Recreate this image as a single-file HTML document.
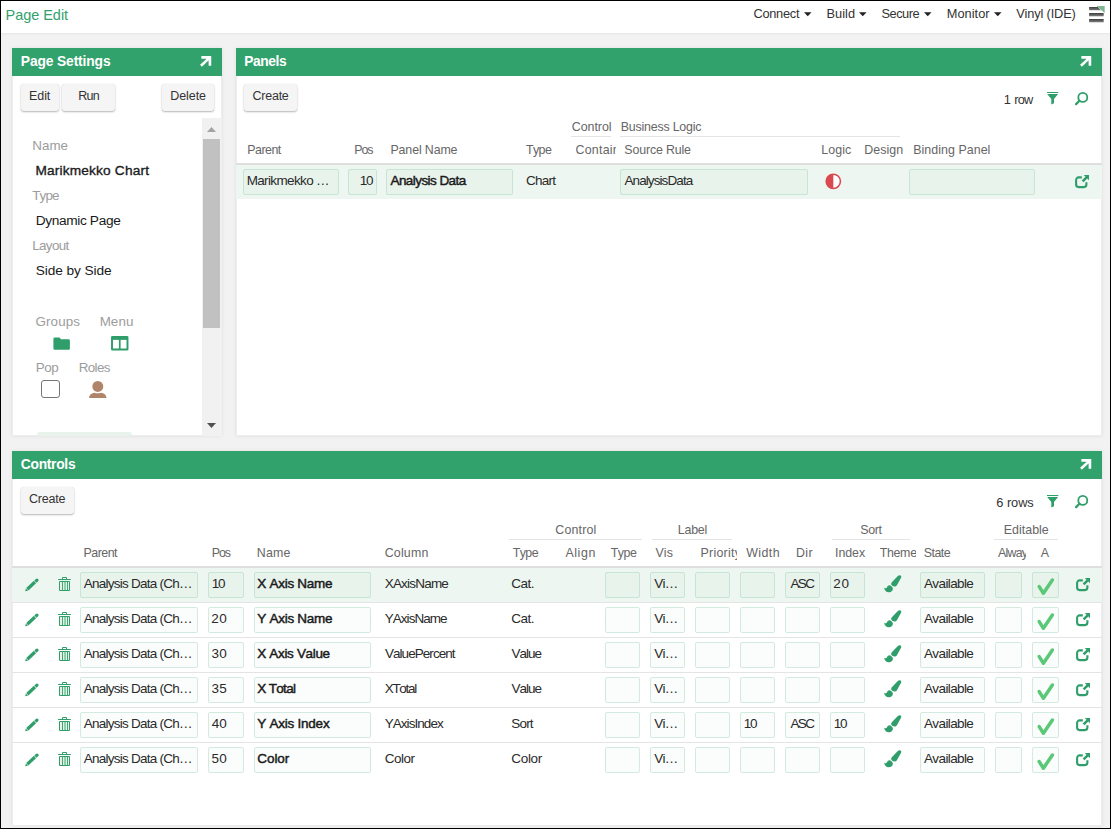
<!DOCTYPE html><html><head><meta charset="utf-8"><title>Page Edit</title><style>
*{box-sizing:border-box}
html,body{margin:0;padding:0}
body{width:1111px;height:829px;position:relative;overflow:hidden;background:#f2f2f2;font-family:"Liberation Sans",sans-serif;font-size:13px;color:#222;font-kerning:none}
.a,.t,svg{position:absolute}
svg{display:block;overflow:visible}
.t{white-space:nowrap;line-height:16px;height:16px;color:#2a2a2a}
.c{overflow:hidden}
#frame{left:0;top:0;width:1111px;height:829px;border:1px solid #000;z-index:50}
#top{left:0;top:0;width:1111px;height:33px;background:#fff;box-shadow:0 1px 2px rgba(0,0,0,.05)}
.panel{background:#fff;border:1px solid #ececec;box-shadow:0 0 4px rgba(0,0,0,.08)}
.ph{height:28px;background:#32a26d}
.pt{color:#fff;font-weight:bold}
.btn{height:27px;background:#f5f5f5;border-radius:3px;box-shadow:0 1px 2px rgba(0,0,0,.28),0 0 1px rgba(0,0,0,.12)}
.lbl{color:#9c9c9c}
.hd{color:#666}
.inp{height:26px;border:1px solid #d3ebdf;border-radius:2px;background:#fbfdfc}
.inp.s{background:#e8f3ec;border-color:#c6e5d4}
.rs{height:1px;background:#e4e4e4}
.ul{height:1px;background:#e4e4e4}
.hl{height:2px;background:#dedede}
.b{font-weight:bold}
</style></head><body>
<div class="a " style="left:0px;top:0px;width:1111px;height:33px;background:#fff;box-shadow:0 1px 2px rgba(0,0,0,.05)"></div>
<span class="t " style="left:5.56px;top:7.00px;font-size:14.5px;letter-spacing:-0.042px;color:#32a26d">Page Edit</span>
<span class="t " style="left:753.45px;top:5.50px;font-size:12.8px;letter-spacing:-0.272px;color:#333">Connect</span>
<span class="t " style="left:826.50px;top:5.50px;font-size:12.8px;letter-spacing:0.016px;color:#333">Build</span>
<span class="t " style="left:881.52px;top:5.50px;font-size:12.8px;letter-spacing:-0.501px;color:#333">Secure</span>
<span class="t " style="left:946.70px;top:5.50px;font-size:12.8px;letter-spacing:0.039px;color:#333">Monitor</span>
<span class="t " style="left:1016.24px;top:5.50px;font-size:12.8px;letter-spacing:-0.161px;color:#333">Vinyl (IDE)</span>
<svg style="left:803.8px;top:11.7px" width="7.5" height="4.5" viewBox="0 0 9 5"><path d="M0 0h9L4.500 5z" fill="#222"/></svg>
<svg style="left:858.7px;top:11.7px" width="7.5" height="4.5" viewBox="0 0 9 5"><path d="M0 0h9L4.500 5z" fill="#222"/></svg>
<svg style="left:923.8px;top:11.7px" width="7.5" height="4.5" viewBox="0 0 9 5"><path d="M0 0h9L4.500 5z" fill="#222"/></svg>
<svg style="left:993.9px;top:11.7px" width="7.5" height="4.5" viewBox="0 0 9 5"><path d="M0 0h9L4.500 5z" fill="#222"/></svg>
<svg style="left:1089.4px;top:6px" width="15.7" height="16.4" viewBox="0 0 15.7 16.4"><defs><linearGradient id="hb" x1="0" y1="0" x2="0" y2="1"><stop offset="0" stop-color="#3c3c3c"/><stop offset="1" stop-color="#808080"/></linearGradient></defs><path d="M0.100 1h8.600l3.300 3.300H0.100z" fill="url(#hb)"/><path d="M0.100 7h14.600v3.300H0.100z" fill="url(#hb)"/><path d="M0.100 13h14.600v3.300H0.100z" fill="url(#hb)"/><path d="M7.600 0H15.700V7.100z" fill="#7db790"/></svg>
<div class="a panel" style="left:12px;top:48px;width:210px;height:388px;"></div>
<div class="a ph" style="left:12px;top:48px;width:210px;"></div>
<span class="t pt b" style="left:20.83px;top:53.50px;font-size:13.8px;letter-spacing:-0.126px;">Page Settings</span>
<svg style="left:200.1px;top:56.2px" width="11.3" height="10.6" viewBox="0 0 11.6 10.8"><path d="M1.400 1.400H10.200V10M9.700 1.900L1 10" fill="none" stroke="#fff" stroke-width="2.700"/></svg>
<div class="a btn" style="left:21px;top:83.5px;width:38px;"></div>
<span class="t " style="left:28.97px;top:88.00px;font-size:12.5px;letter-spacing:-0.057px;color:#333">Edit</span>
<div class="a btn" style="left:62px;top:83.5px;width:53px;"></div>
<span class="t " style="left:78.22px;top:88.00px;font-size:12.5px;letter-spacing:-0.672px;color:#333">Run</span>
<div class="a btn" style="left:162px;top:83.5px;width:52px;"></div>
<span class="t " style="left:170.22px;top:88.00px;font-size:12.5px;letter-spacing:-0.060px;color:#333">Delete</span>
<div class="a " style="left:202px;top:118px;width:20px;height:318px;background:#f1f1f1"></div>
<div class="a " style="left:203.25px;top:139px;width:16.75px;height:189px;background:#c1c1c1"></div>
<svg style="left:207px;top:127px" width="9" height="5" viewBox="0 0 9 5"><path d="M0 5h9L4.500 0z" fill="#a3a3a3"/></svg>
<svg style="left:207px;top:423px" width="9" height="5" viewBox="0 0 9 5"><path d="M0 0h9L4.500 5z" fill="#505050"/></svg>
<span class="t lbl" style="left:32.15px;top:137.50px;font-size:13.4px;letter-spacing:0.067px;">Name</span>
<span class="t " style="left:35.38px;top:162.50px;font-size:13.7px;letter-spacing:0.172px;-webkit-text-stroke:0.45px;color:#1a1a1a;-webkit-text-stroke:0.350px;">Marikmekko Chart</span>
<span class="t lbl" style="left:32.20px;top:187.50px;font-size:13.4px;letter-spacing:-0.798px;">Type</span>
<span class="t " style="left:35.63px;top:212.50px;font-size:13.7px;letter-spacing:-0.351px;color:#1a1a1a">Dynamic Page</span>
<span class="t lbl" style="left:32.15px;top:237.50px;font-size:13.4px;letter-spacing:-0.607px;">Layout</span>
<span class="t " style="left:35.78px;top:262.50px;font-size:13.7px;letter-spacing:-0.099px;color:#1a1a1a">Side by Side</span>
<span class="t lbl" style="left:35.48px;top:313.50px;font-size:13.4px;letter-spacing:0.113px;">Groups</span>
<span class="t lbl" style="left:99.65px;top:313.50px;font-size:13.4px;letter-spacing:0.073px;">Menu</span>
<span class="t lbl" style="left:35.65px;top:359.50px;font-size:13.4px;letter-spacing:-0.340px;">Pop</span>
<span class="t lbl" style="left:78.65px;top:359.50px;font-size:13.4px;letter-spacing:-0.606px;">Roles</span>
<svg style="left:52.75px;top:337px" width="17.5" height="13.25" viewBox="0 0 18 14"><path d="M1.600 0.400h5l1.600 2h8a1.400 1.400 0 0 1 1.400 1.400v8.400a1.400 1.400 0 0 1-1.400 1.400H1.600A1.400 1.400 0 0 1 .2 12.200V1.800A1.400 1.400 0 0 1 1.600.4z" fill="#2f9e6a"/></svg>
<svg style="left:111.25px;top:336.25px" width="17.5" height="14.5" viewBox="0 0 18 15"><rect x="1" y="1" width="16" height="13" rx="0.400" fill="none" stroke="#2f9e6a" stroke-width="2"/><path d="M1 1h16v3H1z" fill="#2f9e6a"/><path d="M9 3v11" stroke="#2f9e6a" stroke-width="1.800"/></svg>
<div class="a " style="left:41.25px;top:380px;width:18.75px;height:18.25px;border:1.500px solid #767676;border-radius:3px;background:#fff"></div>
<svg style="left:89.25px;top:381.25px" width="17.6" height="17" viewBox="0 0 17.2 16.8"><circle cx="8.600" cy="5.400" r="5.400" fill="#b08468"/><path d="M0 16.800C0 13.600 2.800 11.600 5.400 11.500 6.400 11.900 7.400 12.100 8.600 12.100S10.800 11.900 11.800 11.500C14.400 11.600 17.200 13.600 17.200 16.800z" fill="#b08468"/></svg>
<div class="a " style="left:37px;top:432px;width:95px;height:4px;border-radius:3px 3px 0 0;background:#e8f3ec"></div>
<div class="a panel" style="left:236px;top:48px;width:866px;height:388px;"></div>
<div class="a ph" style="left:236px;top:48px;width:866px;"></div>
<span class="t pt b" style="left:244.33px;top:53.50px;font-size:13.8px;letter-spacing:-0.451px;">Panels</span>
<svg style="left:1080.1px;top:56.2px" width="11.3" height="10.6" viewBox="0 0 11.6 10.8"><path d="M1.400 1.400H10.200V10M9.700 1.900L1 10" fill="none" stroke="#fff" stroke-width="2.700"/></svg>
<div class="a btn" style="left:244px;top:83.5px;width:53px;"></div>
<span class="t " style="left:252.52px;top:88.00px;font-size:12.5px;letter-spacing:-0.246px;color:#333">Create</span>
<span class="t " style="left:1003.77px;top:91.50px;font-size:12.8px;letter-spacing:-0.852px;color:#333;word-spacing:1.500px">1 row</span>
<svg style="left:1046.8px;top:92px" width="11.3" height="12.6" viewBox="0 0 11.3 12.6"><path d="M0 0h11.300v1.100H0zM0.200 2.100h10.900L7 6.900v4.300L4.300 12.600V6.900z" fill="#2f9e6a"/></svg>
<svg style="left:1075px;top:91.5px" width="13.2" height="13.2" viewBox="0 0 13.2 13.2"><circle cx="7.800" cy="5.400" r="4.500" fill="none" stroke="#2f9e6a" stroke-width="1.800"/><path d="M4.400 8.800L1.100 12.100" stroke="#2f9e6a" stroke-width="2.300" stroke-linecap="round"/></svg>
<span class="t hd" style="left:571.77px;top:119.00px;font-size:12.4px;letter-spacing:-0.027px;">Control</span>
<span class="t hd" style="left:620.73px;top:119.00px;font-size:12.4px;letter-spacing:-0.197px;">Business Logic</span>
<div class="a ul" style="left:571px;top:136px;width:40px;"></div>
<div class="a ul" style="left:620px;top:136px;width:280px;"></div>
<span class="t hd" style="left:247.23px;top:142.00px;font-size:12.4px;letter-spacing:-0.485px;">Parent</span>
<span class="t hd" style="left:354.23px;top:142.00px;font-size:12.4px;letter-spacing:-1.076px;">Pos</span>
<span class="t hd" style="left:390.48px;top:142.00px;font-size:12.4px;letter-spacing:-0.130px;">Panel Name</span>
<span class="t hd" style="left:525.97px;top:142.00px;font-size:12.4px;letter-spacing:-0.579px;">Type</span>
<span class="t hd c" style="left:575.52px;top:142.00px;font-size:12.4px;letter-spacing:0.240px;width:40.73px;">Container</span>
<span class="t hd" style="left:624.34px;top:142.00px;font-size:12.4px;letter-spacing:-0.152px;">Source Rule</span>
<span class="t hd" style="left:821.23px;top:142.00px;font-size:12.4px;letter-spacing:0.113px;">Logic</span>
<span class="t hd" style="left:864.23px;top:142.00px;font-size:12.4px;letter-spacing:0.075px;">Design</span>
<span class="t hd" style="left:913.23px;top:142.00px;font-size:12.4px;letter-spacing:0.056px;">Binding Panel</span>
<div class="a hl" style="left:236px;top:163px;width:866px;"></div>
<div class="a " style="left:236px;top:165px;width:866px;height:34px;background:#edf6f0"></div>
<div class="a inp s" style="left:243px;top:169px;width:96px;"></div>
<span class="t " style="left:246.64px;top:172.50px;font-size:13.5px;letter-spacing:-0.638px;">Marikmekko …</span>
<div class="a inp s" style="left:348px;top:169px;width:29px;"></div>
<span class="t " style="left:359.72px;top:172.50px;font-size:13.5px;letter-spacing:-1.210px;">10</span>
<div class="a inp s" style="left:386px;top:169px;width:127px;"></div>
<span class="t " style="left:390.47px;top:172.50px;font-size:13.5px;letter-spacing:-0.563px;-webkit-text-stroke:0.45px;color:#1a1a1a;">Analysis Data</span>
<span class="t " style="left:525.96px;top:172.50px;font-size:13.5px;letter-spacing:-0.719px;">Chart</span>
<div class="a inp s" style="left:620px;top:169px;width:188px;"></div>
<span class="t " style="left:624.47px;top:172.50px;font-size:13.5px;letter-spacing:-0.910px;">AnalysisData</span>
<svg style="left:825.4px;top:172.9px" width="16.6" height="16.6" viewBox="0 0 17 17"><circle cx="8.500" cy="8.500" r="7.300" fill="#fff" stroke="#d9494f" stroke-width="1.600"/><path d="M8.500 1.200a7.300 7.300 0 0 0 0 14.600z" fill="#d9494f"/></svg>
<div class="a inp s" style="left:909px;top:169px;width:126px;"></div>
<svg style="left:1075.3px;top:175.2px" width="14" height="13.2" viewBox="0 0 14 13.2"><path d="M6.800 2.400H3.600A2.500 2.500 0 0 0 1.100 4.900V9.600A2.500 2.500 0 0 0 3.600 12.100H8.900A2.500 2.500 0 0 0 11.400 9.600V7.200" fill="none" stroke="#2f9e6a" stroke-width="2.100"/><path d="M8.800 0H14V5.200L12.300 3.500 8.500 7.300 6.700 5.500 10.500 1.700z" fill="#2f9e6a"/></svg>
<div class="a panel" style="left:12px;top:451px;width:1090px;height:375px;"></div>
<div class="a ph" style="left:12px;top:451px;width:1090px;"></div>
<span class="t pt b" style="left:20.83px;top:456.50px;font-size:13.8px;letter-spacing:-0.285px;">Controls</span>
<svg style="left:1080.1px;top:459.2px" width="11.3" height="10.6" viewBox="0 0 11.6 10.8"><path d="M1.400 1.400H10.200V10M9.700 1.900L1 10" fill="none" stroke="#fff" stroke-width="2.700"/></svg>
<div class="a btn" style="left:21px;top:486.5px;width:53px;"></div>
<span class="t " style="left:29.02px;top:491.00px;font-size:12.5px;letter-spacing:-0.196px;color:#333">Create</span>
<span class="t " style="left:996.35px;top:494.50px;font-size:12.8px;letter-spacing:-0.067px;color:#333">6 rows</span>
<svg style="left:1046.8px;top:495px" width="11.3" height="12.6" viewBox="0 0 11.3 12.6"><path d="M0 0h11.300v1.100H0zM0.200 2.100h10.900L7 6.900v4.300L4.300 12.600V6.900z" fill="#2f9e6a"/></svg>
<svg style="left:1075px;top:494.5px" width="13.2" height="13.2" viewBox="0 0 13.2 13.2"><circle cx="7.800" cy="5.400" r="4.500" fill="none" stroke="#2f9e6a" stroke-width="1.800"/><path d="M4.400 8.800L1.100 12.100" stroke="#2f9e6a" stroke-width="2.300" stroke-linecap="round"/></svg>
<span class="t hd" style="left:555.27px;top:522.00px;font-size:12.4px;letter-spacing:0.181px;">Control</span>
<div class="a ul" style="left:509px;top:539px;width:133px;"></div>
<span class="t hd" style="left:677.73px;top:522.00px;font-size:12.4px;letter-spacing:-0.186px;">Label</span>
<div class="a ul" style="left:652px;top:539px;width:80px;"></div>
<span class="t hd" style="left:860.34px;top:522.00px;font-size:12.4px;letter-spacing:-0.329px;">Sort</span>
<div class="a ul" style="left:832px;top:539px;width:78px;"></div>
<span class="t hd" style="left:1003.73px;top:522.00px;font-size:12.4px;letter-spacing:0.037px;">Editable</span>
<div class="a ul" style="left:994px;top:539px;width:64px;"></div>
<span class="t hd" style="left:83.48px;top:545.00px;font-size:12.4px;letter-spacing:-0.485px;">Parent</span>
<span class="t hd" style="left:211.73px;top:545.00px;font-size:12.4px;letter-spacing:-1.076px;">Pos</span>
<span class="t hd" style="left:256.73px;top:545.00px;font-size:12.4px;letter-spacing:0.247px;">Name</span>
<span class="t hd" style="left:384.77px;top:545.00px;font-size:12.4px;letter-spacing:0.161px;">Column</span>
<span class="t hd" style="left:512.72px;top:545.00px;font-size:12.4px;letter-spacing:-0.579px;">Type</span>
<span class="t hd" style="left:565.48px;top:545.00px;font-size:12.4px;letter-spacing:0.564px;">Align</span>
<span class="t hd" style="left:610.72px;top:545.00px;font-size:12.4px;letter-spacing:-0.496px;">Type</span>
<span class="t hd" style="left:655.45px;top:545.00px;font-size:12.4px;letter-spacing:0.138px;">Vis</span>
<span class="t hd c" style="left:700.48px;top:545.00px;font-size:12.4px;letter-spacing:0.280px;width:36.52px;">Priority</span>
<span class="t hd" style="left:746.20px;top:545.00px;font-size:12.4px;letter-spacing:0.416px;">Width</span>
<span class="t hd" style="left:795.98px;top:545.00px;font-size:12.4px;letter-spacing:0.442px;">Dir</span>
<span class="t hd" style="left:835.11px;top:545.00px;font-size:12.4px;letter-spacing:-0.077px;">Index</span>
<span class="t hd c" style="left:879.72px;top:545.00px;font-size:12.4px;letter-spacing:-0.316px;width:36.78px;">Theme</span>
<span class="t hd" style="left:923.84px;top:545.00px;font-size:12.4px;letter-spacing:-0.560px;">State</span>
<span class="t hd c" style="left:997.98px;top:545.00px;font-size:12.4px;letter-spacing:-0.761px;width:28.27px;">Always</span>
<span class="t hd" style="left:1040.73px;top:545.00px;font-size:12.4px;letter-spacing:-0.222px;">A</span>
<div class="a hl" style="left:12px;top:566px;width:1090px;"></div>
<div class="a " style="left:12px;top:568px;width:1090px;height:34px;background:#edf6f0"></div>
<div class="a rs" style="left:12px;top:602px;width:1090px;"></div>
<svg style="left:24.8px;top:577.7px" width="14.2" height="13.4" viewBox="0 0 14.2 13.4"><path d="M0.200 13.200L0.860 10.390 3.040 12.730zM1.230 10.050L3.410 12.390 11.070 5.200 8.890 2.860zM9.330 2.450L11.510 4.790 13.120 3.290A1.600 1.600 0 0 0 10.940 0.950z" fill="#2f9e6a"/></svg>
<svg style="left:58px;top:577px" width="13" height="14" viewBox="0 0 13 14"><path d="M4.500 2.200V0.500h4V2.200" fill="none" stroke="#2f9e6a" stroke-width="1"/><path d="M0.100 2h12.700v1H0.100z" fill="#2f9e6a"/><path d="M1.500 4.500h10v9h-10z" fill="#e6f2e6" stroke="#2f9e6a" stroke-width="1"/><path d="M4.500 4.500v9M7 4.500v9M9.500 4.500v9" stroke="#2f9e6a" stroke-width="0.900"/></svg>
<div class="a inp s" style="left:80px;top:572px;width:118px;"></div>
<span class="t " style="left:83.77px;top:575.50px;font-size:13.5px;letter-spacing:-0.752px;">Analysis Data (Ch…</span>
<div class="a inp s" style="left:208px;top:572px;width:36px;"></div>
<span class="t " style="left:211.72px;top:575.50px;font-size:13.5px;letter-spacing:-1.210px;">10</span>
<div class="a inp s" style="left:254px;top:572px;width:117px;"></div>
<span class="t " style="left:257.20px;top:575.50px;font-size:13.5px;letter-spacing:-0.262px;-webkit-text-stroke:0.45px;color:#1a1a1a;">X Axis Name</span>
<span class="t " style="left:384.70px;top:575.50px;font-size:13.5px;letter-spacing:-0.796px;">XAxisName</span>
<span class="t " style="left:511.21px;top:575.50px;font-size:13.5px;letter-spacing:-0.497px;">Cat.</span>
<div class="a inp s" style="left:605px;top:572px;width:35px;"></div>
<div class="a inp s" style="left:650px;top:572px;width:35px;"></div>
<span class="t " style="left:654.19px;top:575.50px;font-size:13.5px;letter-spacing:-0.731px;">Vi…</span>
<div class="a inp s" style="left:695px;top:572px;width:35px;"></div>
<div class="a inp s" style="left:740px;top:572px;width:35px;"></div>
<div class="a inp s" style="left:785px;top:572px;width:35px;"></div>
<span class="t " style="left:790.47px;top:575.50px;font-size:13.5px;letter-spacing:-1.609px;">ASC</span>
<div class="a inp s" style="left:830px;top:572px;width:35px;"></div>
<span class="t " style="left:833.32px;top:575.50px;font-size:13.5px;letter-spacing:0.690px;">20</span>
<svg style="left:883.9px;top:574.8px" width="17.4" height="17.4" viewBox="0 0 17.4 17.4"><path d="M15.800 0.200C17 0.200 17.600 1.400 17.200 2.600L12.900 10.200C12.200 11.500 10.400 11.900 8.600 11 7.200 10.200 6.800 8.900 7.600 7.600L13.600 1.200C14.200 0.500 15 0.200 15.800 0.200Z" fill="#2f9e6a"/><path d="M5.400 10.300C6.800 10.600 8.200 11.600 8.800 13 9.200 15.400 7.400 17.300 4.800 17.300 2.200 17.300 0.600 15.400 0 12.400 1 13.400 2 13.600 2.800 12.800 3.200 11.400 4.200 10.400 5.400 10.300Z" fill="#2f9e6a"/></svg>
<div class="a inp s" style="left:920px;top:572px;width:65px;"></div>
<span class="t " style="left:923.97px;top:575.50px;font-size:13.5px;letter-spacing:-0.614px;">Available</span>
<div class="a inp s" style="left:995px;top:572px;width:27px;"></div>
<div class="a inp s" style="left:1032px;top:572px;width:27px;"></div>
<svg style="left:1036.8px;top:577.8px" width="17.4" height="17.4" viewBox="0 0 17.4 17.4"><path d="M2.200 8.600L6.400 15.200 15.400 2" fill="none" stroke="#5bc877" stroke-width="3.500" stroke-linecap="round" stroke-linejoin="round"/></svg>
<svg style="left:1076px;top:577.8px" width="14" height="13.2" viewBox="0 0 14 13.2"><path d="M6.800 2.400H3.600A2.500 2.500 0 0 0 1.100 4.900V9.600A2.500 2.500 0 0 0 3.600 12.100H8.900A2.500 2.500 0 0 0 11.400 9.600V7.200" fill="none" stroke="#2f9e6a" stroke-width="2.100"/><path d="M8.800 0H14V5.200L12.300 3.500 8.500 7.300 6.700 5.500 10.500 1.700z" fill="#2f9e6a"/></svg>
<div class="a rs" style="left:12px;top:637px;width:1090px;"></div>
<svg style="left:24.8px;top:612.7px" width="14.2" height="13.4" viewBox="0 0 14.2 13.4"><path d="M0.200 13.200L0.860 10.390 3.040 12.730zM1.230 10.050L3.410 12.390 11.070 5.200 8.890 2.860zM9.330 2.450L11.510 4.790 13.120 3.290A1.600 1.600 0 0 0 10.940 0.950z" fill="#2f9e6a"/></svg>
<svg style="left:58px;top:612px" width="13" height="14" viewBox="0 0 13 14"><path d="M4.500 2.200V0.500h4V2.200" fill="none" stroke="#2f9e6a" stroke-width="1"/><path d="M0.100 2h12.700v1H0.100z" fill="#2f9e6a"/><path d="M1.500 4.500h10v9h-10z" fill="#e6f2e6" stroke="#2f9e6a" stroke-width="1"/><path d="M4.500 4.500v9M7 4.500v9M9.500 4.500v9" stroke="#2f9e6a" stroke-width="0.900"/></svg>
<div class="a inp" style="left:80px;top:607px;width:118px;"></div>
<span class="t " style="left:83.77px;top:610.50px;font-size:13.5px;letter-spacing:-0.752px;">Analysis Data (Ch…</span>
<div class="a inp" style="left:208px;top:607px;width:36px;"></div>
<span class="t " style="left:211.32px;top:610.50px;font-size:13.5px;letter-spacing:0.440px;">20</span>
<div class="a inp" style="left:254px;top:607px;width:117px;"></div>
<span class="t " style="left:257.20px;top:610.50px;font-size:13.5px;letter-spacing:-0.262px;-webkit-text-stroke:0.45px;color:#1a1a1a;">Y Axis Name</span>
<span class="t " style="left:384.70px;top:610.50px;font-size:13.5px;letter-spacing:-0.953px;">YAxisName</span>
<span class="t " style="left:511.21px;top:610.50px;font-size:13.5px;letter-spacing:-0.497px;">Cat.</span>
<div class="a inp" style="left:605px;top:607px;width:35px;"></div>
<div class="a inp" style="left:650px;top:607px;width:35px;"></div>
<span class="t " style="left:654.19px;top:610.50px;font-size:13.5px;letter-spacing:-0.731px;">Vi…</span>
<div class="a inp" style="left:695px;top:607px;width:35px;"></div>
<div class="a inp" style="left:740px;top:607px;width:35px;"></div>
<div class="a inp" style="left:785px;top:607px;width:35px;"></div>
<div class="a inp" style="left:830px;top:607px;width:35px;"></div>
<svg style="left:883.9px;top:609.8px" width="17.4" height="17.4" viewBox="0 0 17.4 17.4"><path d="M15.800 0.200C17 0.200 17.600 1.400 17.200 2.600L12.900 10.200C12.200 11.500 10.400 11.900 8.600 11 7.200 10.200 6.800 8.900 7.600 7.600L13.600 1.200C14.200 0.500 15 0.200 15.800 0.200Z" fill="#2f9e6a"/><path d="M5.400 10.300C6.800 10.600 8.200 11.600 8.800 13 9.200 15.400 7.400 17.300 4.800 17.300 2.200 17.300 0.600 15.400 0 12.400 1 13.400 2 13.600 2.800 12.800 3.200 11.400 4.200 10.400 5.400 10.300Z" fill="#2f9e6a"/></svg>
<div class="a inp" style="left:920px;top:607px;width:65px;"></div>
<span class="t " style="left:923.97px;top:610.50px;font-size:13.5px;letter-spacing:-0.614px;">Available</span>
<div class="a inp" style="left:995px;top:607px;width:27px;"></div>
<div class="a inp" style="left:1032px;top:607px;width:27px;"></div>
<svg style="left:1036.8px;top:612.8px" width="17.4" height="17.4" viewBox="0 0 17.4 17.4"><path d="M2.200 8.600L6.400 15.200 15.400 2" fill="none" stroke="#5bc877" stroke-width="3.500" stroke-linecap="round" stroke-linejoin="round"/></svg>
<svg style="left:1076px;top:612.8px" width="14" height="13.2" viewBox="0 0 14 13.2"><path d="M6.800 2.400H3.600A2.500 2.500 0 0 0 1.100 4.900V9.600A2.500 2.500 0 0 0 3.600 12.100H8.900A2.500 2.500 0 0 0 11.400 9.600V7.200" fill="none" stroke="#2f9e6a" stroke-width="2.100"/><path d="M8.800 0H14V5.200L12.300 3.500 8.500 7.300 6.700 5.500 10.500 1.700z" fill="#2f9e6a"/></svg>
<div class="a rs" style="left:12px;top:672px;width:1090px;"></div>
<svg style="left:24.8px;top:647.7px" width="14.2" height="13.4" viewBox="0 0 14.2 13.4"><path d="M0.200 13.200L0.860 10.390 3.040 12.730zM1.230 10.050L3.410 12.390 11.070 5.200 8.890 2.860zM9.330 2.450L11.510 4.790 13.120 3.290A1.600 1.600 0 0 0 10.940 0.950z" fill="#2f9e6a"/></svg>
<svg style="left:58px;top:647px" width="13" height="14" viewBox="0 0 13 14"><path d="M4.500 2.200V0.500h4V2.200" fill="none" stroke="#2f9e6a" stroke-width="1"/><path d="M0.100 2h12.700v1H0.100z" fill="#2f9e6a"/><path d="M1.500 4.500h10v9h-10z" fill="#e6f2e6" stroke="#2f9e6a" stroke-width="1"/><path d="M4.500 4.500v9M7 4.500v9M9.500 4.500v9" stroke="#2f9e6a" stroke-width="0.900"/></svg>
<div class="a inp" style="left:80px;top:642px;width:118px;"></div>
<span class="t " style="left:83.77px;top:645.50px;font-size:13.5px;letter-spacing:-0.752px;">Analysis Data (Ch…</span>
<div class="a inp" style="left:208px;top:642px;width:36px;"></div>
<span class="t " style="left:211.49px;top:645.50px;font-size:13.5px;letter-spacing:0.275px;">30</span>
<div class="a inp" style="left:254px;top:642px;width:117px;"></div>
<span class="t " style="left:257.20px;top:645.50px;font-size:13.5px;letter-spacing:-0.330px;-webkit-text-stroke:0.45px;color:#1a1a1a;">X Axis Value</span>
<span class="t " style="left:384.94px;top:645.50px;font-size:13.5px;letter-spacing:-0.945px;">ValuePercent</span>
<span class="t " style="left:511.44px;top:645.50px;font-size:13.5px;letter-spacing:-0.967px;">Value</span>
<div class="a inp" style="left:605px;top:642px;width:35px;"></div>
<div class="a inp" style="left:650px;top:642px;width:35px;"></div>
<span class="t " style="left:654.19px;top:645.50px;font-size:13.5px;letter-spacing:-0.731px;">Vi…</span>
<div class="a inp" style="left:695px;top:642px;width:35px;"></div>
<div class="a inp" style="left:740px;top:642px;width:35px;"></div>
<div class="a inp" style="left:785px;top:642px;width:35px;"></div>
<div class="a inp" style="left:830px;top:642px;width:35px;"></div>
<svg style="left:883.9px;top:644.8px" width="17.4" height="17.4" viewBox="0 0 17.4 17.4"><path d="M15.800 0.200C17 0.200 17.600 1.400 17.200 2.600L12.900 10.200C12.200 11.500 10.400 11.900 8.600 11 7.200 10.200 6.800 8.900 7.600 7.600L13.600 1.200C14.200 0.500 15 0.200 15.800 0.200Z" fill="#2f9e6a"/><path d="M5.400 10.300C6.800 10.600 8.200 11.600 8.800 13 9.200 15.400 7.400 17.300 4.800 17.300 2.200 17.300 0.600 15.400 0 12.400 1 13.400 2 13.600 2.800 12.800 3.200 11.400 4.200 10.400 5.400 10.300Z" fill="#2f9e6a"/></svg>
<div class="a inp" style="left:920px;top:642px;width:65px;"></div>
<span class="t " style="left:923.97px;top:645.50px;font-size:13.5px;letter-spacing:-0.614px;">Available</span>
<div class="a inp" style="left:995px;top:642px;width:27px;"></div>
<div class="a inp" style="left:1032px;top:642px;width:27px;"></div>
<svg style="left:1036.8px;top:647.8px" width="17.4" height="17.4" viewBox="0 0 17.4 17.4"><path d="M2.200 8.600L6.400 15.200 15.400 2" fill="none" stroke="#5bc877" stroke-width="3.500" stroke-linecap="round" stroke-linejoin="round"/></svg>
<svg style="left:1076px;top:647.8px" width="14" height="13.2" viewBox="0 0 14 13.2"><path d="M6.800 2.400H3.600A2.500 2.500 0 0 0 1.100 4.900V9.600A2.500 2.500 0 0 0 3.600 12.100H8.900A2.500 2.500 0 0 0 11.400 9.600V7.200" fill="none" stroke="#2f9e6a" stroke-width="2.100"/><path d="M8.800 0H14V5.200L12.300 3.500 8.500 7.300 6.700 5.500 10.500 1.700z" fill="#2f9e6a"/></svg>
<div class="a rs" style="left:12px;top:707px;width:1090px;"></div>
<svg style="left:24.8px;top:682.7px" width="14.2" height="13.4" viewBox="0 0 14.2 13.4"><path d="M0.200 13.200L0.860 10.390 3.040 12.730zM1.230 10.050L3.410 12.390 11.070 5.200 8.890 2.860zM9.330 2.450L11.510 4.790 13.120 3.290A1.600 1.600 0 0 0 10.940 0.950z" fill="#2f9e6a"/></svg>
<svg style="left:58px;top:682px" width="13" height="14" viewBox="0 0 13 14"><path d="M4.500 2.200V0.500h4V2.200" fill="none" stroke="#2f9e6a" stroke-width="1"/><path d="M0.100 2h12.700v1H0.100z" fill="#2f9e6a"/><path d="M1.500 4.500h10v9h-10z" fill="#e6f2e6" stroke="#2f9e6a" stroke-width="1"/><path d="M4.500 4.500v9M7 4.500v9M9.500 4.500v9" stroke="#2f9e6a" stroke-width="0.900"/></svg>
<div class="a inp" style="left:80px;top:677px;width:118px;"></div>
<span class="t " style="left:83.77px;top:680.50px;font-size:13.5px;letter-spacing:-0.752px;">Analysis Data (Ch…</span>
<div class="a inp" style="left:208px;top:677px;width:36px;"></div>
<span class="t " style="left:211.49px;top:680.50px;font-size:13.5px;letter-spacing:0.315px;">35</span>
<div class="a inp" style="left:254px;top:677px;width:117px;"></div>
<span class="t " style="left:257.20px;top:680.50px;font-size:13.5px;letter-spacing:-0.644px;-webkit-text-stroke:0.45px;color:#1a1a1a;">X Total</span>
<span class="t " style="left:384.70px;top:680.50px;font-size:13.5px;letter-spacing:-1.302px;">XTotal</span>
<span class="t " style="left:511.44px;top:680.50px;font-size:13.5px;letter-spacing:-0.967px;">Value</span>
<div class="a inp" style="left:605px;top:677px;width:35px;"></div>
<div class="a inp" style="left:650px;top:677px;width:35px;"></div>
<span class="t " style="left:654.19px;top:680.50px;font-size:13.5px;letter-spacing:-0.731px;">Vi…</span>
<div class="a inp" style="left:695px;top:677px;width:35px;"></div>
<div class="a inp" style="left:740px;top:677px;width:35px;"></div>
<div class="a inp" style="left:785px;top:677px;width:35px;"></div>
<div class="a inp" style="left:830px;top:677px;width:35px;"></div>
<svg style="left:883.9px;top:679.8px" width="17.4" height="17.4" viewBox="0 0 17.4 17.4"><path d="M15.800 0.200C17 0.200 17.600 1.400 17.200 2.600L12.900 10.200C12.200 11.500 10.400 11.900 8.600 11 7.200 10.200 6.800 8.900 7.600 7.600L13.600 1.200C14.200 0.500 15 0.200 15.800 0.200Z" fill="#2f9e6a"/><path d="M5.400 10.300C6.800 10.600 8.200 11.600 8.800 13 9.200 15.400 7.400 17.300 4.800 17.300 2.200 17.300 0.600 15.400 0 12.400 1 13.400 2 13.600 2.800 12.800 3.200 11.400 4.200 10.400 5.400 10.300Z" fill="#2f9e6a"/></svg>
<div class="a inp" style="left:920px;top:677px;width:65px;"></div>
<span class="t " style="left:923.97px;top:680.50px;font-size:13.5px;letter-spacing:-0.614px;">Available</span>
<div class="a inp" style="left:995px;top:677px;width:27px;"></div>
<div class="a inp" style="left:1032px;top:677px;width:27px;"></div>
<svg style="left:1036.8px;top:682.8px" width="17.4" height="17.4" viewBox="0 0 17.4 17.4"><path d="M2.200 8.600L6.400 15.200 15.400 2" fill="none" stroke="#5bc877" stroke-width="3.500" stroke-linecap="round" stroke-linejoin="round"/></svg>
<svg style="left:1076px;top:682.8px" width="14" height="13.2" viewBox="0 0 14 13.2"><path d="M6.800 2.400H3.600A2.500 2.500 0 0 0 1.100 4.900V9.600A2.500 2.500 0 0 0 3.600 12.100H8.900A2.500 2.500 0 0 0 11.400 9.600V7.200" fill="none" stroke="#2f9e6a" stroke-width="2.100"/><path d="M8.800 0H14V5.200L12.300 3.500 8.500 7.300 6.700 5.500 10.500 1.700z" fill="#2f9e6a"/></svg>
<div class="a rs" style="left:12px;top:742px;width:1090px;"></div>
<svg style="left:24.8px;top:717.7px" width="14.2" height="13.4" viewBox="0 0 14.2 13.4"><path d="M0.200 13.200L0.860 10.390 3.040 12.730zM1.230 10.050L3.410 12.390 11.070 5.200 8.890 2.860zM9.330 2.450L11.510 4.790 13.120 3.290A1.600 1.600 0 0 0 10.940 0.950z" fill="#2f9e6a"/></svg>
<svg style="left:58px;top:717px" width="13" height="14" viewBox="0 0 13 14"><path d="M4.500 2.200V0.500h4V2.200" fill="none" stroke="#2f9e6a" stroke-width="1"/><path d="M0.100 2h12.700v1H0.100z" fill="#2f9e6a"/><path d="M1.500 4.500h10v9h-10z" fill="#e6f2e6" stroke="#2f9e6a" stroke-width="1"/><path d="M4.500 4.500v9M7 4.500v9M9.500 4.500v9" stroke="#2f9e6a" stroke-width="0.900"/></svg>
<div class="a inp" style="left:80px;top:712px;width:118px;"></div>
<span class="t " style="left:83.77px;top:715.50px;font-size:13.5px;letter-spacing:-0.752px;">Analysis Data (Ch…</span>
<div class="a inp" style="left:208px;top:712px;width:36px;"></div>
<span class="t " style="left:211.69px;top:715.50px;font-size:13.5px;letter-spacing:0.071px;">40</span>
<div class="a inp" style="left:254px;top:712px;width:117px;"></div>
<span class="t " style="left:257.20px;top:715.50px;font-size:13.5px;letter-spacing:-0.236px;-webkit-text-stroke:0.45px;color:#1a1a1a;">Y Axis Index</span>
<span class="t " style="left:384.70px;top:715.50px;font-size:13.5px;letter-spacing:-0.943px;">YAxisIndex</span>
<span class="t " style="left:511.29px;top:715.50px;font-size:13.5px;letter-spacing:-0.816px;">Sort</span>
<div class="a inp" style="left:605px;top:712px;width:35px;"></div>
<div class="a inp" style="left:650px;top:712px;width:35px;"></div>
<span class="t " style="left:654.19px;top:715.50px;font-size:13.5px;letter-spacing:-0.731px;">Vi…</span>
<div class="a inp" style="left:695px;top:712px;width:35px;"></div>
<div class="a inp" style="left:740px;top:712px;width:35px;"></div>
<span class="t " style="left:743.72px;top:715.50px;font-size:13.5px;letter-spacing:-1.210px;">10</span>
<div class="a inp" style="left:785px;top:712px;width:35px;"></div>
<span class="t " style="left:790.47px;top:715.50px;font-size:13.5px;letter-spacing:-1.609px;">ASC</span>
<div class="a inp" style="left:830px;top:712px;width:35px;"></div>
<span class="t " style="left:833.72px;top:715.50px;font-size:13.5px;letter-spacing:-1.210px;">10</span>
<svg style="left:883.9px;top:714.8px" width="17.4" height="17.4" viewBox="0 0 17.4 17.4"><path d="M15.800 0.200C17 0.200 17.600 1.400 17.200 2.600L12.900 10.200C12.200 11.500 10.400 11.900 8.600 11 7.200 10.200 6.800 8.900 7.600 7.600L13.600 1.200C14.200 0.500 15 0.200 15.800 0.200Z" fill="#2f9e6a"/><path d="M5.400 10.300C6.800 10.600 8.200 11.600 8.800 13 9.200 15.400 7.400 17.300 4.800 17.300 2.200 17.300 0.600 15.400 0 12.400 1 13.400 2 13.600 2.800 12.800 3.200 11.400 4.200 10.400 5.400 10.300Z" fill="#2f9e6a"/></svg>
<div class="a inp" style="left:920px;top:712px;width:65px;"></div>
<span class="t " style="left:923.97px;top:715.50px;font-size:13.5px;letter-spacing:-0.614px;">Available</span>
<div class="a inp" style="left:995px;top:712px;width:27px;"></div>
<div class="a inp" style="left:1032px;top:712px;width:27px;"></div>
<svg style="left:1036.8px;top:717.8px" width="17.4" height="17.4" viewBox="0 0 17.4 17.4"><path d="M2.200 8.600L6.400 15.200 15.400 2" fill="none" stroke="#5bc877" stroke-width="3.500" stroke-linecap="round" stroke-linejoin="round"/></svg>
<svg style="left:1076px;top:717.8px" width="14" height="13.2" viewBox="0 0 14 13.2"><path d="M6.800 2.400H3.600A2.500 2.500 0 0 0 1.100 4.900V9.600A2.500 2.500 0 0 0 3.600 12.100H8.900A2.500 2.500 0 0 0 11.400 9.600V7.200" fill="none" stroke="#2f9e6a" stroke-width="2.100"/><path d="M8.800 0H14V5.200L12.300 3.500 8.500 7.300 6.700 5.500 10.500 1.700z" fill="#2f9e6a"/></svg>
<svg style="left:24.8px;top:752.7px" width="14.2" height="13.4" viewBox="0 0 14.2 13.4"><path d="M0.200 13.200L0.860 10.390 3.040 12.730zM1.230 10.050L3.410 12.390 11.070 5.200 8.890 2.860zM9.330 2.450L11.510 4.790 13.120 3.290A1.600 1.600 0 0 0 10.940 0.950z" fill="#2f9e6a"/></svg>
<svg style="left:58px;top:752px" width="13" height="14" viewBox="0 0 13 14"><path d="M4.500 2.200V0.500h4V2.200" fill="none" stroke="#2f9e6a" stroke-width="1"/><path d="M0.100 2h12.700v1H0.100z" fill="#2f9e6a"/><path d="M1.500 4.500h10v9h-10z" fill="#e6f2e6" stroke="#2f9e6a" stroke-width="1"/><path d="M4.500 4.500v9M7 4.500v9M9.500 4.500v9" stroke="#2f9e6a" stroke-width="0.900"/></svg>
<div class="a inp" style="left:80px;top:747px;width:118px;"></div>
<span class="t " style="left:83.77px;top:750.50px;font-size:13.5px;letter-spacing:-0.752px;">Analysis Data (Ch…</span>
<div class="a inp" style="left:208px;top:747px;width:36px;"></div>
<span class="t " style="left:211.46px;top:750.50px;font-size:13.5px;letter-spacing:0.302px;">50</span>
<div class="a inp" style="left:254px;top:747px;width:117px;"></div>
<span class="t " style="left:257.21px;top:750.50px;font-size:13.5px;letter-spacing:-0.038px;-webkit-text-stroke:0.45px;color:#1a1a1a;">Color</span>
<span class="t " style="left:384.71px;top:750.50px;font-size:13.5px;letter-spacing:-0.463px;">Color</span>
<span class="t " style="left:511.21px;top:750.50px;font-size:13.5px;letter-spacing:-0.288px;">Color</span>
<div class="a inp" style="left:605px;top:747px;width:35px;"></div>
<div class="a inp" style="left:650px;top:747px;width:35px;"></div>
<span class="t " style="left:654.19px;top:750.50px;font-size:13.5px;letter-spacing:-0.731px;">Vi…</span>
<div class="a inp" style="left:695px;top:747px;width:35px;"></div>
<div class="a inp" style="left:740px;top:747px;width:35px;"></div>
<div class="a inp" style="left:785px;top:747px;width:35px;"></div>
<div class="a inp" style="left:830px;top:747px;width:35px;"></div>
<svg style="left:883.9px;top:749.8px" width="17.4" height="17.4" viewBox="0 0 17.4 17.4"><path d="M15.800 0.200C17 0.200 17.600 1.400 17.200 2.600L12.900 10.200C12.200 11.500 10.400 11.900 8.600 11 7.200 10.200 6.800 8.900 7.600 7.600L13.600 1.200C14.200 0.500 15 0.200 15.800 0.200Z" fill="#2f9e6a"/><path d="M5.400 10.300C6.800 10.600 8.200 11.600 8.800 13 9.200 15.400 7.400 17.300 4.800 17.300 2.200 17.300 0.600 15.400 0 12.400 1 13.400 2 13.600 2.800 12.800 3.200 11.400 4.200 10.400 5.400 10.300Z" fill="#2f9e6a"/></svg>
<div class="a inp" style="left:920px;top:747px;width:65px;"></div>
<span class="t " style="left:923.97px;top:750.50px;font-size:13.5px;letter-spacing:-0.614px;">Available</span>
<div class="a inp" style="left:995px;top:747px;width:27px;"></div>
<div class="a inp" style="left:1032px;top:747px;width:27px;"></div>
<svg style="left:1036.8px;top:752.8px" width="17.4" height="17.4" viewBox="0 0 17.4 17.4"><path d="M2.200 8.600L6.400 15.200 15.400 2" fill="none" stroke="#5bc877" stroke-width="3.500" stroke-linecap="round" stroke-linejoin="round"/></svg>
<svg style="left:1076px;top:752.8px" width="14" height="13.2" viewBox="0 0 14 13.2"><path d="M6.800 2.400H3.600A2.500 2.500 0 0 0 1.100 4.900V9.600A2.500 2.500 0 0 0 3.600 12.100H8.900A2.500 2.500 0 0 0 11.400 9.600V7.200" fill="none" stroke="#2f9e6a" stroke-width="2.100"/><path d="M8.800 0H14V5.200L12.300 3.500 8.500 7.300 6.700 5.500 10.500 1.700z" fill="#2f9e6a"/></svg>
<div class="a " style="left:0px;top:0px;width:1111px;height:829px;border:1px solid #000;z-index:50"></div>
</body></html>
